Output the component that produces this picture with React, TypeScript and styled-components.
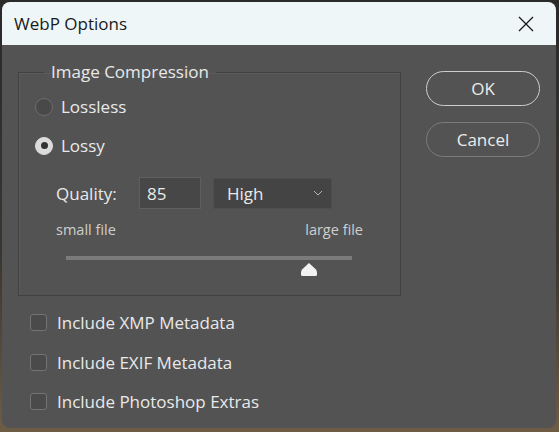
import React from "react";
import styled, { createGlobalStyle } from "styled-components";

const Global = createGlobalStyle`
  html, body { margin: 0; padding: 0; }
  body {
    width: 559px;
    height: 432px;
    overflow: hidden;
    background: linear-gradient(180deg, #2a2a2a 0%, #3b3631 60%, #6e5c45 100%);
    font-family: "Open Sans", "Noto Sans", sans-serif;
  }
`;

const Window = styled.div`
  margin: 2px 3px 0 2px;
  width: 554px;
  height: 426px;
  border-radius: 8px;
  overflow: hidden;
  background: #535353;
  display: flex;
  flex-direction: column;
`;

const TitleBar = styled.div`
  height: 43px;
  flex: none;
  background: #eef6f8;
  display: flex;
  align-items: center;
  justify-content: space-between;
  padding: 0 22px 0 12px;
  color: #1a1a1a;
  font-size: 17px;
`;

const Body = styled.div`
  flex: 1;
  display: flex;
  padding: 16px 16px 0 16px;
  gap: 25px;
  color: #e9e9e9;
`;

const LeftCol = styled.div`
  width: 384px;
  display: flex;
  flex-direction: column;
`;

const Group = styled.fieldset`
  margin: 0;
  padding: 0 0 0 16px;
  height: 235px;
  box-sizing: border-box;
  border: 1px solid #414141;
  box-shadow: inset 1px 1px 0 #5b5b5b;
  min-width: 0;
`;

const Legend = styled.legend`
  margin-left: 9px;
  padding: 0 7px;
  font-size: 17px;
  line-height: 22px;
  color: #e9e9e9;
`;

const RadioRow = styled.div<{ $first?: boolean }>`
  margin-top: ${(p) => (p.$first ? "4px" : "0")};
  height: 39px;
  display: flex;
  align-items: center;
  gap: 8px;
  font-size: 17px;
`;

const RadioDot = styled.span<{ $on?: boolean }>`
  width: 18px;
  height: 18px;
  box-sizing: border-box;
  border-radius: 50%;
  border: 1.5px solid ${(p) => (p.$on ? "#dcdcdc" : "#6d6d6d")};
  background: ${(p) => (p.$on ? "#dcdcdc" : "#494949")};
  display: flex;
  align-items: center;
  justify-content: center;
  &::after {
    content: "";
    width: 7px;
    height: 7px;
    border-radius: 50%;
    background: ${(p) => (p.$on ? "#333" : "transparent")};
  }
`;

const Inner = styled.div`
  padding-left: 21px;
  width: 307px;
  display: flex;
  flex-direction: column;
`;

const QualityRow = styled.div`
  margin-top: 11px;
  height: 34px;
  display: flex;
  align-items: center;
  font-size: 17px;
`;

const QLabel = styled.span`
  width: 83px;
`;

const NumBox = styled.div`
  width: 62px;
  height: 32px;
  box-sizing: border-box;
  border: 1px solid #5f5f5f;
  background: #474747;
  display: flex;
  align-items: center;
  padding-left: 7px;
  font-size: 17px;
`;

const Select = styled.div`
  margin-left: 12px;
  width: 119px;
  height: 31px;
  box-sizing: border-box;
  border: 1px solid #4e4e4e;
  border-radius: 2px;
  background: #444444;
  display: flex;
  align-items: center;
  justify-content: space-between;
  padding: 0 8px 0 13px;
  font-size: 17px;
`;

const EndsRow = styled.div`
  margin-top: 7px;
  height: 24px;
  display: flex;
  align-items: center;
  justify-content: space-between;
  font-size: 14.5px;
  color: #cfcfcf;
`;

const SliderBox = styled.div`
  position: relative;
  margin: 15px 0 0 10px;
  width: 286px;
  height: 24px;
`;

const Track = styled.div`
  height: 4px;
  background: #7b7b7b;
`;

const Thumb = styled.svg`
  position: absolute;
  top: 6px;
`;

const Checks = styled.div`
  margin-top: 7px;
  display: flex;
  flex-direction: column;
`;

const CheckRow = styled.div`
  height: 39.5px;
  display: flex;
  align-items: center;
  gap: 10px;
  padding-left: 12px;
  font-size: 17px;
`;

const Box = styled.span`
  width: 17px;
  height: 17px;
  box-sizing: border-box;
  border: 1.5px solid #747474;
  border-radius: 3px;
  background: #4a4a4a;
`;

const RightCol = styled.div`
  padding-top: 10px;
  display: flex;
  flex-direction: column;
  gap: 16px;
`;

const Button = styled.div<{ $primary?: boolean }>`
  width: 114px;
  height: 35px;
  box-sizing: border-box;
  border-radius: 18px;
  border: ${(p) => (p.$primary ? "1.5px solid #cdcdcd" : "1px solid #7c7c7c")};
  display: flex;
  align-items: center;
  justify-content: center;
  font-size: 17px;
  color: #ececec;
`;

export default function App() {
  const value = 85;
  return (
    <>
      <Global />
      <Window>
        <TitleBar>
          <span>WebP Options</span>
          <svg width="16" height="16" viewBox="0 0 16 16">
            <path d="M1 1 L15 15 M15 1 L1 15" stroke="#1a1a1a" strokeWidth="1.3" fill="none" />
          </svg>
        </TitleBar>
        <Body>
          <LeftCol>
            <Group>
              <Legend>Image Compression</Legend>
              <RadioRow $first>
                <RadioDot />
                <span>Lossless</span>
              </RadioRow>
              <RadioRow>
                <RadioDot $on />
                <span>Lossy</span>
              </RadioRow>
              <Inner>
                <QualityRow>
                  <QLabel>Quality:</QLabel>
                  <NumBox>{value}</NumBox>
                  <Select>
                    <span>High</span>
                    <svg width="10" height="6" viewBox="0 0 10 6">
                      <path d="M1 1 L5 5 L9 1" stroke="#b8b8b8" strokeWidth="1" fill="none" />
                    </svg>
                  </Select>
                </QualityRow>
                <EndsRow>
                  <span>small file</span>
                  <span>large file</span>
                </EndsRow>
                <SliderBox>
                  <Track />
                  <Thumb
                    width="18"
                    height="15"
                    viewBox="0 0 18 15"
                    style={{ left: `${(value / 100) * 286 - 9}px` }}
                  >
                    <path d="M9 1 L16 7.5 Q17 9 17 11 L17 12.5 Q17 14 15.5 14 L2.5 14 Q1 14 1 12.5 L1 11 Q1 9 2 7.5 Z" fill="#f2f2f2" />
                  </Thumb>
                </SliderBox>
              </Inner>
            </Group>
            <Checks>
              <CheckRow>
                <Box />
                <span>Include XMP Metadata</span>
              </CheckRow>
              <CheckRow>
                <Box />
                <span>Include EXIF Metadata</span>
              </CheckRow>
              <CheckRow>
                <Box />
                <span>Include Photoshop Extras</span>
              </CheckRow>
            </Checks>
          </LeftCol>
          <RightCol>
            <Button $primary>OK</Button>
            <Button>Cancel</Button>
          </RightCol>
        </Body>
      </Window>
    </>
  );
}
